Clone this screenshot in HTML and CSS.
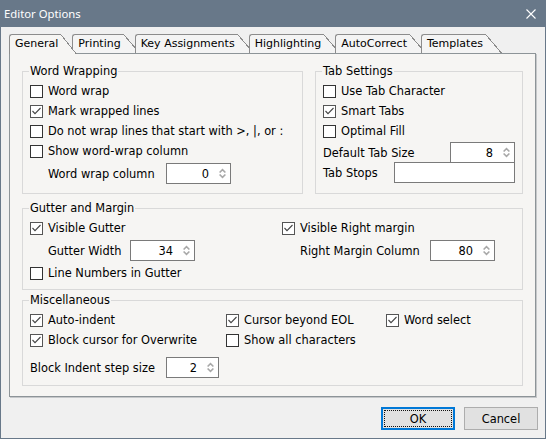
FILE: index.html
```html
<!DOCTYPE html>
<html>
<head>
<meta charset="utf-8">
<title>Editor Options</title>
<link rel="stylesheet" href="styles.css">
</head>
<body>
<div class="window">
  <div class="titlebar">
    <span class="title">Editor Options</span>
    <svg class="close" width="10" height="10" viewBox="0 0 10 10"><path d="M0.5 0.5L9.5 9.5M9.5 0.5L0.5 9.5" stroke="#fff" stroke-width="1.1" fill="none"/></svg>
  </div>
  <div class="client">
    <div class="tabs">
      <div class="tab active"><span class="tab-label">General</span></div>
      <div class="tab"><span class="tab-label">Printing</span></div>
      <div class="tab"><span class="tab-label">Key Assignments</span></div>
      <div class="tab"><span class="tab-label">Highlighting</span></div>
      <div class="tab"><span class="tab-label">AutoCorrect</span></div>
      <div class="tab"><span class="tab-label">Templates</span></div>
    </div>
    <div class="panel">
      <div class="top-row">
        <fieldset class="group group-ww">
          <legend>Word Wrapping</legend>
          <div class="check"><span class="box"></span>Word wrap</div>
          <div class="check"><span class="box checked"><svg width="11" height="11" viewBox="0 0 11 11"><polyline points="1.5,5 4,7.6 9.5,2" fill="none" stroke="#444" stroke-width="1.1"/></svg></span>Mark wrapped lines</div>
          <div class="check"><span class="box"></span>Do not wrap lines that start with &gt;, |, or :</div>
          <div class="check"><span class="box"></span>Show word-wrap column</div>
          <div class="field-row ww-field">
            <span class="field-label w118">Word wrap column</span>
            <div class="spin w65"><span class="spin-value">0</span><svg class="spin-arrows" width="7" height="11" viewBox="0 0 7 11"><polyline points="0.6,4.5 3.5,1.6 6.4,4.5" fill="none" stroke="#a8a8a8" stroke-width="1.6"/><polyline points="0.6,6.5 3.5,9.4 6.4,6.5" fill="none" stroke="#a8a8a8" stroke-width="1.6"/></svg></div>
          </div>
        </fieldset>
        <fieldset class="group group-ts">
          <legend>Tab Settings</legend>
          <div class="check"><span class="box"></span>Use Tab Character</div>
          <div class="check"><span class="box checked"><svg width="11" height="11" viewBox="0 0 11 11"><polyline points="1.5,5 4,7.6 9.5,2" fill="none" stroke="#444" stroke-width="1.1"/></svg></span>Smart Tabs</div>
          <div class="check"><span class="box"></span>Optimal Fill</div>
          <div class="ts-row ts-first">
            <span class="field-label">Default Tab Size</span>
            <div class="spin w65"><span class="spin-value">8</span><svg class="spin-arrows" width="7" height="11" viewBox="0 0 7 11"><polyline points="0.6,4.5 3.5,1.6 6.4,4.5" fill="none" stroke="#a8a8a8" stroke-width="1.6"/><polyline points="0.6,6.5 3.5,9.4 6.4,6.5" fill="none" stroke="#a8a8a8" stroke-width="1.6"/></svg></div>
          </div>
          <div class="ts-row ts-second">
            <span class="field-label">Tab Stops</span>
            <div class="edit w121"></div>
          </div>
        </fieldset>
      </div>
      <fieldset class="group group-gm">
        <legend>Gutter and Margin</legend>
        <div class="gm-grid">
          <div class="check"><span class="box checked"><svg width="11" height="11" viewBox="0 0 11 11"><polyline points="1.5,5 4,7.6 9.5,2" fill="none" stroke="#444" stroke-width="1.1"/></svg></span>Visible Gutter</div>
          <div class="check"><span class="box checked"><svg width="11" height="11" viewBox="0 0 11 11"><polyline points="1.5,5 4,7.6 9.5,2" fill="none" stroke="#444" stroke-width="1.1"/></svg></span>Visible Right margin</div>
          <div class="field-row">
            <span class="field-label w82">Gutter Width</span>
            <div class="spin w65"><span class="spin-value">34</span><svg class="spin-arrows" width="7" height="11" viewBox="0 0 7 11"><polyline points="0.6,4.5 3.5,1.6 6.4,4.5" fill="none" stroke="#a8a8a8" stroke-width="1.6"/><polyline points="0.6,6.5 3.5,9.4 6.4,6.5" fill="none" stroke="#a8a8a8" stroke-width="1.6"/></svg></div>
          </div>
          <div class="field-row">
            <span class="field-label w130">Right Margin Column</span>
            <div class="spin w65"><span class="spin-value">80</span><svg class="spin-arrows" width="7" height="11" viewBox="0 0 7 11"><polyline points="0.6,4.5 3.5,1.6 6.4,4.5" fill="none" stroke="#a8a8a8" stroke-width="1.6"/><polyline points="0.6,6.5 3.5,9.4 6.4,6.5" fill="none" stroke="#a8a8a8" stroke-width="1.6"/></svg></div>
          </div>
          <div class="check"><span class="box"></span>Line Numbers in Gutter</div>
        </div>
      </fieldset>
      <fieldset class="group group-misc">
        <legend>Miscellaneous</legend>
        <div class="misc-grid">
          <div class="check"><span class="box checked"><svg width="11" height="11" viewBox="0 0 11 11"><polyline points="1.5,5 4,7.6 9.5,2" fill="none" stroke="#444" stroke-width="1.1"/></svg></span>Auto-indent</div>
          <div class="check"><span class="box checked"><svg width="11" height="11" viewBox="0 0 11 11"><polyline points="1.5,5 4,7.6 9.5,2" fill="none" stroke="#444" stroke-width="1.1"/></svg></span>Cursor beyond EOL</div>
          <div class="check"><span class="box checked"><svg width="11" height="11" viewBox="0 0 11 11"><polyline points="1.5,5 4,7.6 9.5,2" fill="none" stroke="#444" stroke-width="1.1"/></svg></span>Word select</div>
          <div class="check"><span class="box checked"><svg width="11" height="11" viewBox="0 0 11 11"><polyline points="1.5,5 4,7.6 9.5,2" fill="none" stroke="#444" stroke-width="1.1"/></svg></span>Block cursor for Overwrite</div>
          <div class="check"><span class="box"></span>Show all characters</div>
        </div>
        <div class="field-row misc-field">
          <span class="field-label w136">Block Indent step size</span>
          <div class="spin w53"><span class="spin-value">2</span><svg class="spin-arrows" width="7" height="11" viewBox="0 0 7 11"><polyline points="0.6,4.5 3.5,1.6 6.4,4.5" fill="none" stroke="#a8a8a8" stroke-width="1.6"/><polyline points="0.6,6.5 3.5,9.4 6.4,6.5" fill="none" stroke="#a8a8a8" stroke-width="1.6"/></svg></div>
        </div>
      </fieldset>
    </div>
    <div class="buttons">
      <button class="btn btn-default"><span class="focus-ring">OK</span></button>
      <button class="btn">Cancel</button>
    </div>
  </div>
</div>
</body>
</html>
```

FILE: styles.css
```css
html, body {
  margin: 0;
  padding: 0;
}
body {
  font-family: "DejaVu Sans", "Liberation Sans", sans-serif;
  font-size: 11.4px;
  color: #000;
  background: #ffffff;
}
.window {
  width: 546px;
  height: 439px;
  box-sizing: border-box;
  background: #687889;
  padding: 0 1px 1px;
  display: flex;
  flex-direction: column;
}
.titlebar {
  height: 27px;
  flex: none;
  display: flex;
  align-items: center;
  justify-content: space-between;
  padding-left: 3px;
  color: #fff;
  font-family: "Noto Sans", "Open Sans", sans-serif;
  font-size: 11.3px;
}
.close {
  margin-right: 9px;
}
.client {
  flex: 1;
  background: #f0f0f0;
  padding: 7px 0 0 8px;
  display: flex;
  flex-direction: column;
}
.tabs {
  display: flex;
  height: 20px;
  margin-bottom: -1px;
  position: relative;
  z-index: 1;
  font-size: 11px;
}
.tab {
  display: flex;
  height: 19px;
  margin-left: -5px;
  position: relative;
  --fill: #f4f4f4;
}
.tab:first-child {
  margin-left: 0;
}
.tab-label {
  box-sizing: border-box;
  height: 100%;
  border-left: 1px solid #8c8c8c;
  border-top: 1px solid #8c8c8c;
  border-top-left-radius: 3px;
  padding: 0 3px 0 5px;
  line-height: 18px;
  background: var(--fill);
  white-space: nowrap;
}
.tab::after {
  content: "";
  width: 16px;
  height: 100%;
  background: linear-gradient(to top right, var(--fill) calc(50% - 1px), #8c8c8c calc(50% - 1px), #8c8c8c 50%, transparent 50%);
}
.tab.active {
  height: 20px;
  z-index: 2;
  --fill: #f6f5f3;
}
.panel {
  width: 527px;
  height: 344px;
  box-sizing: border-box;
  border: 1px solid #8d9498;
  background: #f6f5f3;
  box-shadow: 1px 1px 0 #c6c8ca;
  padding: 10px 12px 0;
}
.top-row {
  display: flex;
  gap: 12px;
}
.group {
  margin: 0;
  border: 1px solid #d9d9d9;
  padding: 3px 7px 9px;
  min-width: 0;
}
.group legend {
  padding: 0 1px;
  line-height: 14px;
  height: 14px;
  margin-left: -1px;
}
.group-ww {
  width: 281px;
  box-sizing: border-box;
}
.group-ts {
  width: 208px;
  box-sizing: border-box;
}
.group-gm {
  margin-top: 7px;
  padding-bottom: 6px;
}
.group-misc {
  margin-top: 3px;
  padding-bottom: 7px;
}
.check {
  display: flex;
  align-items: center;
  height: 20px;
  white-space: nowrap;
}
.box {
  width: 13px;
  height: 13px;
  box-sizing: border-box;
  border: 1px solid #333;
  background: #fff;
  margin-right: 5px;
  display: flex;
  align-items: center;
  justify-content: center;
  flex: none;
}
.box.checked {
  border-color: #555;
}
.field-row {
  display: flex;
  align-items: center;
  height: 21px;
  padding-left: 18px;
}
.ww-field {
  margin-top: 2px;
}
.misc-field {
  margin-top: 7px;
  padding-left: 0;
}
.field-label {
  flex: none;
  white-space: nowrap;
}
.w118 { width: 118px; }
.w82 { width: 82px; }
.w130 { width: 130px; }
.w136 { width: 136px; }
.w65 { width: 65px; }
.w53 { width: 53px; }
.w121 { width: 121px; }
.spin, .edit {
  box-sizing: border-box;
  height: 21px;
  border: 1px solid #7a7a7a;
  background: #fff;
  flex: none;
}
.spin {
  display: flex;
  align-items: center;
  justify-content: flex-end;
  padding-right: 4px;
}
.spin-arrows {
  margin-left: 10px;
  flex: none;
}
.ts-row {
  display: flex;
  align-items: center;
  justify-content: space-between;
  height: 21px;
}
.ts-first {
  margin-top: 1px;
}
.ts-second {
  margin-top: -1px;
}
.gm-grid {
  display: grid;
  grid-template-columns: 252px 1fr;
  grid-template-rows: 20px 21px 20px;
  row-gap: 2px;
}
.misc-grid {
  display: grid;
  grid-template-columns: 196px 160px 1fr;
  grid-template-rows: 20px 20px;
}
.buttons {
  display: flex;
  justify-content: flex-end;
  gap: 9px;
  margin-top: 10px;
  padding-right: 7px;
}
.btn {
  width: 74px;
  height: 23px;
  box-sizing: border-box;
  border: 1px solid #adadad;
  background: #e1e1e1;
  font-family: "DejaVu Sans", "Liberation Sans", sans-serif;
  font-size: 11.4px;
  color: #000;
  padding: 0;
  margin: 0;
  display: flex;
  align-items: center;
  justify-content: center;
}
.btn-default {
  border: 2px solid #0078d7;
  align-items: stretch;
}
.focus-ring {
  flex: 1;
  margin: 1px;
  border: 1px dotted #111;
  display: flex;
  align-items: center;
  justify-content: center;
}
```
